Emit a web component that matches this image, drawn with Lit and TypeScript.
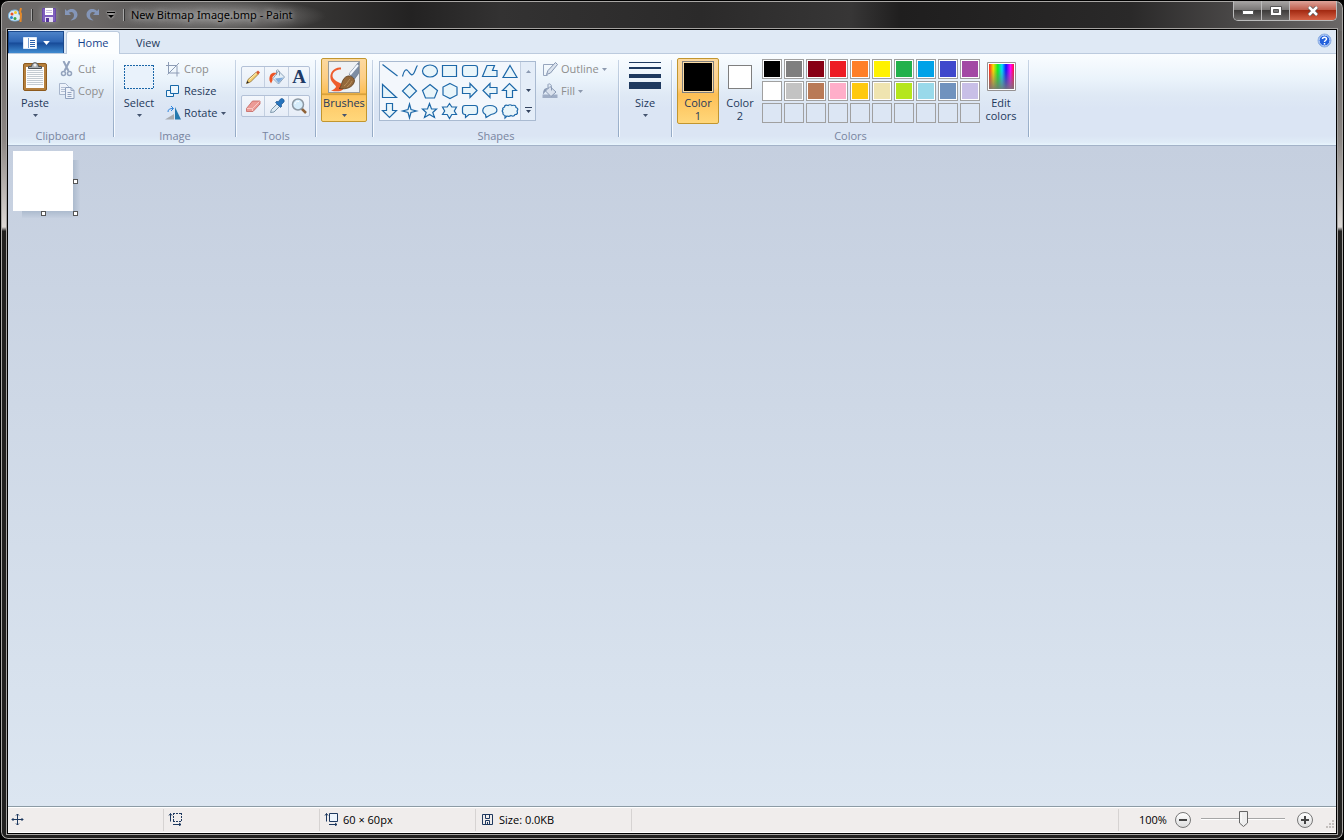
import { LitElement, html, svg, css } from "lit";
import { customElement, property, state } from "lit/decorators.js";

const PALETTE = [
  ["Black", "#000000"], ["Gray-50%", "#7f7f7f"], ["Dark red", "#880015"], ["Red", "#ed1c24"], ["Orange", "#ff7f27"],
  ["Yellow", "#fff200"], ["Green", "#22b14c"], ["Turquoise", "#00a2e8"], ["Indigo", "#3f48cc"], ["Purple", "#a349a4"],
  ["White", "#ffffff"], ["Gray-25%", "#c3c3c3"], ["Brown", "#b97a57"], ["Rose", "#ffaec9"], ["Gold", "#ffc90e"],
  ["Light yellow", "#efe4b0"], ["Lime", "#b5e61d"], ["Light turquoise", "#99d9ea"], ["Blue-gray", "#7092be"], ["Lavender", "#c8bfe7"],
];

const SHAPES: [string, string][] = [
  ["Line", "M2.5 3.5 17.5 15"],
  ["Curve", "M2.5 15.5C4 9 6 7.5 8 10S12 16 14 12 16.500 5 17.500 4.500"],
  ["Oval", "M2.500 10a7.500 6 0 1 0 15 0a7.500 6 0 1 0-15 0z"],
  ["Rectangle", "M2.500 4.500h14v11h-14z"],
  ["Rounded rectangle", "M5 4.500h10q2.500 0 2.500 2.500v6q0 2.500-2.500 2.500h-10q-2.500 0-2.500-2.500v-6q0-2.500 2.500-2.500z"],
  ["Polygon", "M7 4.500h7.500l-2 5h4.500v6H2.500z"],
  ["Triangle", "M10 4.500 17 16.500H3z"],
  ["Right triangle", "M2.500 3.500v13h14z"],
  ["Diamond", "M9.500 3 16.500 10 9.500 17 2.500 10z"],
  ["Pentagon", "M10 3.500 17.500 9.500 14.500 17h-9L2.500 9.500z"],
  ["Hexagon", "M10 2.500 17 6v8l-7 3.500L3 14V6z"],
  ["Right arrow", "M2.500 6.500h7.500v-4l7 7-7 7v-4H2.500z"],
  ["Left arrow", "M17 6.500h-7v-4l-7 7 7 7v-4h7z"],
  ["Up arrow", "M6.500 16.500v-7h-4l7-7 7 7h-4v7z"],
  ["Down arrow", "M6.500 2.500v7h-4l7 7 7-7h-4v-7z"],
  ["Four-point star", "M9.500 3 11 8.500 16.500 10 11 11.500 9.500 17 8 11.500 2.500 10 8 8.500z"],
  ["Five-point star", "M9.500 2.500 11.500 8H16.500L12.800 11.500 14.500 16.500 9.500 13.500 4.500 16.500 6.200 11.500 2.500 8H7.500z"],
  ["Six-point star", "M9.500 2.500 11.800 6H16.500L14.300 10 16.500 13.500H11.800L9.500 17.500 7.200 13.500H2.500L4.700 10 2.500 6H7.200z"],
  ["Rounded rectangular callout", "M5 4.500h10q2.500 0 2.500 2.500v4q0 2.500-2.500 2.500H9l-3.500 3v-3H5q-2.500 0-2.500-2.500v-4q0-2.500 2.500-2.500z"],
  ["Oval callout", "M5.500 13.500C1 11 2 4.500 10 4.500s10 8 1 9L6 16.500z"],
  ["Cloud callout", "M4.500 6q0-2.500 3.500-1.500 2-1.500 4 0 4-1 4 2 3 1 1 3.500 1.500 3.500-2 3.500-1 2.500-4 1-2 1.500-4 .5L5 17v-2.500q-2.500-.5-2-3-1.500-1.500 0-3Q2 7 4.500 6z"],
];

const icon = (size: number, body: unknown, box = size) =>
  html`<svg class="ic" width=${size} height=${size} viewBox="0 0 ${box} ${box}" fill="none" aria-hidden="true">${body}</svg>`;

const I = {
  app: svg`<path d="M7 3C2 3 .5 6 .5 9s2.500 5 6.500 5c3 0 6-1.500 6-4 0-1.500-1.500-2-2.500-3 .5-3-1-4-3.500-4z" fill="#d8ecf8" stroke="#7db4dc"/><circle cx="4" cy="7" r="1.500" fill="#e8542c"/><circle cx="7.500" cy="5.500" r="1.500" fill="#f3c528"/><circle cx="3.500" cy="10.500" r="1.500" fill="#2c82d0"/><circle cx="7" cy="11.500" r="1.500" fill="#3da64a"/><path d="m13 1-1 4 1 2-.5 8" stroke="#e58a2b" stroke-width="2"/>`,
  save: svg`<path d="M1.500 1.500h13v13h-13z" fill="#7f5fbd" stroke="#6a4ba8"/><path d="M4 1h8v7H4z" fill="#fff"/><path d="M5 3.500h6M5 5.500h6" stroke="#c9bde0"/><path d="M4 10h8v5H4z" fill="#e5ddf3"/><path d="M5 11h3v4H5z" fill="#56379a"/>`,
  undo: svg`<path d="M2 2v6h6L5.800 5.800C9 4 11 6 11 8.500c0 2-1.500 3.500-3.500 5C12.500 13 14.500 10.500 14.500 7.500 14 2 8 .5 4 4z" fill="#8496b8"/>`,
  redo: svg`<path d="M14 2v6H8l2.200-2.200C7 4 5 6 5 8.500c0 2 1.500 3.500 3.500 5C3.500 13 1.500 10.500 1.500 7.500 2 2 8 .5 12 4z" fill="#8496b8"/>`,
  paste: svg`<rect x="4.500" y="2.500" width="23" height="27" rx="1.500" fill="#b57f3c" stroke="#8d5a1d"/><path d="M7 6h18v21H7z" fill="#fdfdfd"/><path d="M8 9.500h16M8 11.500h16M8 13.500h16M8 15.500h16M8 17.500h16M8 19.500h16M8 21.500h16M8 23.500h16" stroke="#c4cbd1"/><path d="M9.500 5.500h3c0-5 7-5 7 0h3v2h-13z" fill="#a9adb0" stroke="#4d5154"/><circle cx="16" cy="4" r="1.500" fill="#eee"/>`,
  cut: svg`<path d="M4.500 0 9.500 10M10.500 0 5.500 10" stroke="#93a3bd" stroke-width="2"/><circle cx="4.500" cy="12.500" r="2" stroke="#93a3bd" stroke-width="1.500"/><circle cx="10.500" cy="12.500" r="2" stroke="#93a3bd" stroke-width="1.500"/>`,
  copy: svg`<path d="M.5.500h6l3 3v8h-9z" fill="#edf2fa" stroke="#a8b6cc"/><path d="M2 4.500h4M2 6.500h4M2 8.500h4" stroke="#b3bfd3"/><path d="M6.500 4.500h5.500l3 3v8H6.500z" fill="#edf2fa" stroke="#8fa0bd"/><path d="M12 4.500v3h3M8.500 9.500h4M8.500 11.500h4M8.500 13.500h4" stroke="#94a4c0"/>`,
  select: svg`<rect x="1.500" y="4.500" width="29" height="23" fill="#e9f2fb"/><path d="M1 4.500h30M1 27.500h30M1.500 4v24M30.500 4v24" stroke="#1a66a8" stroke-dasharray="2 1"/>`,
  crop: svg`<path d="M3.500 1v11h11M1 4.500h11v11M2.500 13.500 14 2" stroke="#8d9cb5"/>`,
  resize: svg`<path d="M5.500 2.500h8v8h-8zM5.500 7.500H1.500v6h7v-3" fill="#eef7fd" stroke="#1768a8"/>`,
  rotate: svg`<path d="M0 14.500 9 9v5.500z" fill="#a9acb0"/><path d="M10 2v12.500h6z" fill="#2579ae"/><path d="M3 7C3 4 5 3.500 8 3.500M6 1l2.500 2.500L6 6" stroke="#2d84dd"/>`,
  pencil: svg`<path d="m1.500 14.500 1.500-4L11.500 3l2 2L5.500 13z" fill="#f5cf6b" stroke="#8f7138" stroke-width=".8"/><path d="m11 3.500 2-2 2 2-2 2z" fill="#d7572f"/><path d="m4.500 10.500 7-6.500" stroke="#fff3c4"/><path d="m1.500 14.500.8-2.500 1.700 1.500z" fill="#222"/>`,
  bucket: svg`<path d="M9.500 2 15.500 8l-6 7L4 9.500z" fill="#e4eff7" stroke="#7790ab" stroke-width=".8"/><path d="M6 9.500 14.500 8.500l-5 5.500z" fill="#7fabdc"/><path d="M7.500 6V1.500c1-1.500 3 0 3 2v3" stroke="#7b8c9e" stroke-width=".8"/><path d="M7.500 4C3 3 0 5 .5 11.500l1.500 3 1.500-3V8z" fill="#ed5426"/>`,
  eraser: svg`<path d="m1.500 10.500 6-7.500h7.500v3L8 13.500H1.500z" fill="#ec9b96" stroke="#c4645f" stroke-width=".8"/><path d="m2 10.500h5.500l7-7M7.500 10.500V13" stroke="#f8c9c5"/>`,
  picker: svg`<path d="m1.500 14.500 1-3L8 6l2.500 2.500L5 14z" fill="#dceaf4" stroke="#7f98ac"/><path d="m6.500 4.500 5 5 1.500-1.500-1-1 3-3c1-2-1.500-4.500-3.500-3l-2.500 3-1-1z" fill="#2674bd" stroke="#174e88" stroke-width=".6"/>`,
  magnifier: svg`<path d="m10 10 5 5" stroke="#8f6238" stroke-width="2.500"/><circle cx="7" cy="6.500" r="5.500" fill="#d6edfb" stroke="#8c98a3" stroke-width="1.500"/><path d="M4 6C4.500 4 6 3 8 3.500" stroke="#fff"/>`,
  brush: svg`<rect x=".5" y=".5" width="31" height="31" fill="#eef1f4" stroke="#9b9b98"/><path d="M13 6.500C7 5.500 1.500 11 2.500 17c.5 4 4 6 5.500 8.500 0 1.500-3 3.500-5 4 5 1.500 10 1 12-1l-2-6C9 21 4.500 18 4.500 15 4.500 11 8 8.500 13 8.500z" fill="#ee5c2c"/><path d="M21 13 30.500 1.500v11L26.500 18z" fill="#7e8ea4" stroke="#5f6f85" stroke-width=".7"/><path d="m22 13.500 8-9.500" stroke="#f4f9ff" stroke-width="2"/><path d="M11 27.500c3-1 2-11 9-12.500 3-.5 6.500 2 6.500 5-1 6-8 9-15.500 7.500z" fill="#94683a" stroke="#5a3c1d" stroke-width=".8"/><path d="M16 25c3-2 4-5 6-7M19 26c3-2 4-4 5-6" stroke="#b88f5c"/>`,
  outline: svg`<path d="M11 3.500H1.500v11h4" stroke="#97a6be"/><path d="m4.500 13.500 1.500-4L13.500 1.500l2 2L8.500 12z" fill="#dce4ef" stroke="#8595b0"/>`,
  fill: svg`<path d="M.5 11.500h15V15H.5z" fill="#a0aec6"/><path d="M8 3.500 14 9l-5 4.500L3.500 8z" fill="#dae2ee" stroke="#8a9ab4"/><path d="M6 6V1.500c1-1.500 3.500 0 3.500 2v4" stroke="#8a9ab4"/><path d="M5.500 5C2.500 5 1 7 1 11.500l2.500-3z" fill="#8a9ab4"/>`,
  lines: svg`<path d="M0 1h32v1H0zM0 6h32v2H0zM0 13h32v4H0zM0 21h32v7H0z" fill="#1e395f"/>`,
  spectrum: svg`<defs><linearGradient id="hue"><stop offset="0" stop-color="#f22"/><stop offset=".17" stop-color="#fd0"/><stop offset=".35" stop-color="#1e2"/><stop offset=".52" stop-color="#0df"/><stop offset=".68" stop-color="#11f"/><stop offset=".86" stop-color="#f0f"/><stop offset="1" stop-color="#f13"/></linearGradient><linearGradient id="fade" x2="0" y2="1"><stop offset=".2" stop-color="#777" stop-opacity="0"/><stop offset="1" stop-color="#777" stop-opacity=".9"/></linearGradient></defs><path d="M2.500 1.500h28v28h-28z" fill="#fff" stroke="#969292"/><path d="M4 3h25v25H4z" fill="url(#hue)"/><path d="M4 3h25v25H4z" fill="url(#fade)"/>`,
  move: svg`<path d="M6.500 1v11M1 6.500h11M5 2.500 6.500 1 8 2.500M5 10.500 6.500 12 8 10.500M2.500 5 1 6.500 2.500 8M10.500 5 12 6.500 10.500 8" stroke="#1e395f"/>`,
  selection: svg`<path d="M2.500 1.500v8M1 3.500l1.500-2L4 3.500M5 12.500h8M11 11l2 1.500-2 1.500" stroke="#1e395f"/><path d="M5 1.500h9M5 9.500h9M5.500 1v9M13.500 1v9" stroke="#1e395f" stroke-dasharray="2 1"/>`,
  dims: svg`<path d="M2.500 1.500v8M1 3.500l1.500-2L4 3.500M5 12.500h8M11 11l2 1.500-2 1.500" stroke="#1e395f"/><path d="M5.500 1.500h8v8h-8z" fill="#edf5fd" stroke="#1e395f"/>`,
  disk: svg`<path d="M2.500 2.500h10v10h-10zM5.500 2.500h4v4h-4zM5.500 12.500v-4h4v4M7.500 10v2" stroke="#1e395f"/>`,
};

const arrow = () => html`<svg class="arrow" width="5" height="3" viewBox="0 0 5 3" aria-hidden="true"><path d="M0 0h5L2.500 3z" fill="currentColor"/></svg>`;

@customElement("paint-group")
export class PaintGroup extends LitElement {
  @property() label = "";
  static styles = css`
    :host { display: flex; flex: none; }
    section { display: flex; flex-direction: column; }
    .body { display: flex; height: 71px; }
    .label { height: 14px; line-height: 14px; text-align: center; color: #7884a0; }
    .sep { width: 1px; height: 77px; margin: 2px 1px 0 0; background: linear-gradient(#c8d5e5, #93a9c5); box-shadow: 1px 0 #f6faff; }
  `;
  render() {
    return html`<section aria-label=${this.label || "Tool options"}><div class="body"><slot></slot></div><div class="label">${this.label}</div></section><span class="sep"></span>`;
  }
}

@customElement("app-root")
export class AppRoot extends LitElement {
  @state() zoom = 50;

  static styles = css`
    :host {
      display: block; height: 100vh; background: #000; color: #1e395b;
      font: 11px/13px "Open Sans", "Noto Sans", sans-serif;
    }
    * { box-sizing: border-box; }
    button { font: inherit; color: inherit; background: none; border: 0; padding: 0; margin: 0; }
    .ic, .arrow { display: block; flex: none; }
    .window {
      height: 100%; display: flex; flex-direction: column; padding: 0 6px 5px;
      border: 1px solid #000; border-radius: 8px;
      box-shadow: inset 0 0 0 1px #a9a7a5;
      background:
        radial-gradient(closest-side, #8d8b8a, #7a787799 60%, transparent) 105px -3px / 220px 36px no-repeat,
        linear-gradient(#65615f, #8d8885 55%, #dcd8d5 98%, #2b2a29) 0 30px / 6px 200px no-repeat,
        linear-gradient(#65615f, #8d8885 55%, #dcd8d5 98%, #2b2a29) 100% 30px / 6px 200px no-repeat,
        linear-gradient(90deg, #6b6867 0, #6b6867 90px, #4a4948 220px, #333231 330px, #232222 410px, #333232 500px, #2b2a2a 700px, #373636 850px, #1f1e1e 900px, #2a2929 1130px, #6b6867 100%) 0 0 / 100% 30px no-repeat,
        #222120;
    }
    .title { flex: none; display: flex; height: 28px; align-items: center; padding-left: 1px; }
    .title .bar { width: 2px; height: 12px; border-left: 1px solid #aaa; border-right: 1px solid #333; }
    .quick { display: flex; align-items: center; gap: 6px; margin: 0 6px 0 7px; }
    .quick button { display: block; }
    .quick button:nth-of-type(1) { margin-left: 2px; filter: drop-shadow(0 0 3px #999); }
    .quick .more { width: 8px; color: #000; filter: drop-shadow(0 0 1px #fff); }
    .quick .bar:last-child { margin-left: 2px; }
    .caption { margin: 0; font: 11px/14px "Noto Sans", sans-serif; color: #000; padding: 0 8px 0 0;
      text-shadow: 0 0 5px #b5b5b5, 0 0 8px #aaa; white-space: nowrap; }
    .controls { display: flex; margin-left: auto; align-self: flex-start; height: 20px;
      border: 1px solid #bbb; border-top: 0; border-radius: 0 0 5px 5px; overflow: hidden; }
    .controls button { width: 28px; display: grid; place-items: center; border-right: 1px solid #bbb;
      background: linear-gradient(#a8a6a5, #7b7978 45%, #3e3c3b 50%, #6d6b6a); }
    .controls .close { width: 46px; border: 0; background: linear-gradient(#dda399, #c1604f 45%, #a32a12 50%, #d66246); }
    .controls .min { padding-top: 4px; }
    .frame { flex: 1; min-height: 0; display: flex; flex-direction: column; border: 1px solid #000; box-shadow: 0 0 0 1px #a4a2a0; }
    .tabs { flex: none; display: flex; height: 24px; background: #dfe9f5; border-bottom: 1px solid #bccbde; padding-top: 1px; }
    .file { width: 56px; margin-right: 2px; display: flex; align-items: center; justify-content: center; gap: 6px; color: #fff;
      border: 1px solid #1c4a8d; border-bottom: 0; background: linear-gradient(#4d83c8, #2c64b3 48%, #174a98 52%, #3f8bd0); }
    .file .arrow { width: 7px; height: 4px; }
    .tab { width: 56px; color: #1e395b; }
    .tab.on { width: 54px; height: 23px; border: 1px solid #bccbde; border-bottom: 0; border-radius: 3px 3px 0 0; background: #fcfeff; color: #15428b; padding-bottom: 2px; }
    .help { margin: 2px 4px 0 auto; align-self: flex-start; }
    .ribbon { flex: none; display: flex; height: 92px; padding-top: 4px; border-bottom: 1px solid #a3b2c8; overflow: hidden;
      background: linear-gradient(#fafdff, #eaf3fb 28%, #dfe9f5 45%, #dbe5f4 60%, #dbe5f4 90%, #e0ecf7 97%, #e8f5fd); }
    .row { display: flex; }
    .big { width: 42px; height: 66px; flex: none; display: flex; flex-direction: column; align-items: center; padding-top: 3px; }
    .big .pic { width: 32px; height: 32px; margin-bottom: 3px; display: grid; place-items: center; }
    .big .arrow { margin-top: 5px; color: #44546f; }
    .hot { border: 1px solid #c2962f; border-radius: 2px; padding-top: 2px;
      background: linear-gradient(#fcd9a0, #fdcf86 45%, #fdbf55 55%, #ffd77b); }
    .brushes { width: 46px; height: 64px; background: linear-gradient(#fcd9a0, #fdcf86 30%, #fdbf55 55%, #d9a23c 56%, #d9a23c 58%, #fdc561 59%, #ffd77b); }
    .col { display: flex; flex-direction: column; }
    .small { height: 22px; display: flex; align-items: center; gap: 3px; padding: 0 3px 2px; white-space: nowrap; }
    .small .ic, .small .arrow { margin-top: 2px; }
    .small .arrow { color: #44546f; }
    .small:disabled { color: #8d8d8d; }
    .small:disabled .arrow { color: #8d99ae; }
    .clip { padding: 0 4px 0 6px; width: 105px; }
    .image { padding-left: 3px; width: 120px; }
    .image .col { margin-left: 2px; }
    .tools { width: 78px; padding: 8px 5px 0 4px; display: flex; flex-direction: column; gap: 7px; }
    .strip { display: grid; grid-template-columns: 23px 24px 1fr; height: 22px; border: 1px solid #b3c1d7; border-radius: 2px;
      background: linear-gradient(#f3f7fc, #e6edf7); }
    .strip button { display: grid; place-items: center; border-right: 1px solid #c3cfe0; }
    .strip button:last-child { border: 0; }
    .strip .letter { font: bold 19px/20px "Liberation Serif", serif; color: #1e3a66; }
    .brushbox { width: 55px; padding-left: 4px; }
    .shapes { width: 244px; padding-left: 5px; display: flex; }
    .gallery { margin-top: 3px; width: 157px; height: 60px; display: flex; background: #f3f7fc; box-shadow: inset 0 0 0 1px #a9bad1; }
    .grid { display: grid; grid-template-columns: repeat(7, 20px); grid-auto-rows: 20px; padding-left: 1px; }
    .scroll { flex: 1; display: grid; grid-template-rows: repeat(3, 1fr); margin: 1px 1px 1px 0; border-left: 1px solid #c3cfe0; background: #e4edf8; color: #33435f; }
    .scroll button { display: grid; place-items: center; }
    .scroll button:disabled { color: #8c9ab2; }
    .shapes .col { margin-left: 3px; }
    .size { width: 51px; padding-left: 4px; }
    .colors { width: 355px; padding-left: 4px; display: flex; }
    .chip { border: 1px solid #7f7f7f; background: #fff; padding: 1px; display: block; }
    .chip.large { width: 32px; height: 32px; background: #fbdca6; }
    .chip.mid { width: 24px; height: 24px; }
    .ink { display: block; width: 100%; height: 100%; }
    .large .ink { background: #000; }
    .mid .ink { background: #fff; }
    .palette { display: grid; grid-template-columns: repeat(10, 20px); grid-auto-rows: 20px; gap: 2px; margin: 1px 0 0 1px; }
    .palette button { border: 1px solid #a0a0a0; padding: 1px; background: #fff; }
    .palette button:disabled { background: #dce6f4; }
    .work { flex: 1; min-height: 0; padding: 5px; background: linear-gradient(#c5cfdf, #dce6f1); }
    .sheet { position: relative; width: 60px; height: 60px; background: #fff; }
    .sheet::before { content: ""; position: absolute; left: 9px; top: 9px; width: 58px; height: 58px;
      background:
        linear-gradient(90deg, #a9b8cb, #c5cfdf) 100% 0 / 8px 50px no-repeat,
        linear-gradient(#a9b8cb, #c5cfdf) 0 100% / 50px 8px no-repeat,
        radial-gradient(circle at 0 0, #a9b8cb, #c5cfdf 8px) 100% 100% / 8px 8px no-repeat; }
    .paper { position: absolute; inset: 0; background: #fff; }
    .handle { position: absolute; width: 5px; height: 5px; background: #fff; border: 1px solid #555; }
    .e { left: 60px; top: 28px; } .s { left: 28px; top: 60px; } .se { left: 60px; top: 60px; }
    .status { flex: none; display: flex; height: 27px; background: #f0edec; color: #000;
      border-top: 1px solid #8c9ba5; box-shadow: inset 0 1px #fff, inset 0 -1px #fff; }
    .cell { width: 156px; display: flex; align-items: center; gap: 5px; padding: 0 4px 2px; margin: 2px 0; border-right: 1px solid #d6d3d2; white-space: nowrap; }
    .cell:first-child { padding-left: 3px; }
    .cell.wide { flex: 1; }
    .zoom { display: flex; align-items: center; width: 217px; padding-left: 20px; }
    .pct { width: 36px; padding-bottom: 2px; }
    .round { width: 16px; height: 16px; border: 1px solid #777; border-radius: 8px; background: linear-gradient(#fff, #ddd); display: grid; place-items: center; }
    input[type="range"] { appearance: none; width: 84px; height: 16px; margin: 0 12px 2px 10px; background: linear-gradient(#a6a6a6, #a6a6a6) 0 7px / 100% 1px no-repeat, linear-gradient(#fff, #fff) 0 8px / 100% 1px no-repeat; }
    input::-webkit-slider-thumb { appearance: none; width: 10px; height: 16px;
      background: url("data:image/svg+xml,%3Csvg xmlns='http://www.w3.org/2000/svg' width='10' height='16'%3E%3Cpath d='M1.500 .5h8v11.500l-4 3.500-4-3.500z' fill='%23eee' stroke='%23666'/%3E%3Cpath d='M3 2v9' stroke='white'/%3E%3C/svg%3E"); }
    .grip { margin: 9px 2px 0 auto; }
  `;

  render() {
    return html`<div class="window">
      <header class="title">
        ${icon(16, I.app)}
        <div class="quick">
          <span class="bar"></span>
          <button aria-label="Save">${icon(16, I.save)}</button>
          <button aria-label="Undo">${icon(16, I.undo)}</button>
          <button aria-label="Redo">${icon(16, I.redo)}</button>
          <button class="more" aria-label="Customize"><svg class="ic" width="8" height="8" aria-hidden="true"><path d="M0 1h8v1H0zM1 4h6L4 7z"/></svg></button>
          <span class="bar"></span>
        </div>
        <h1 class="caption">New Bitmap Image.bmp - Paint</h1>
        <div class="controls">
          <button class="min" aria-label="Minimize"><svg class="ic" width="12" height="5"><path d="M.5.500h11v4H.5z" fill="#fff" stroke="#555"/></svg></button>
          <button aria-label="Maximize"><svg class="ic" width="12" height="10"><path d="M.5.500h11v9H.5z" fill="#fff" stroke="#555"/><path d="M3.500 3.500h5v3h-5z" fill="#777" stroke="#555"/></svg></button>
          <button class="close" aria-label="Close"><svg class="ic" width="12" height="10"><path d="m2 1 8 8M10 1 2 9" stroke="#555" stroke-width="4"/><path d="m2 1 8 8M10 1 2 9" stroke="#fff" stroke-width="2.500"/></svg></button>
        </div>
      </header>
      <main class="frame">
        <nav class="tabs">
          <button class="file" aria-label="Paint menu"><svg class="ic" width="14" height="12"><path d="M.5.500h13v11H.5z" fill="#fff" stroke="#dce9f8"/><path d="M5.500 1v10" stroke="#7ba0d0"/><path d="M7 3.500h5M7 5.500h5M7 7.500h5M7 9.500h5" stroke="#2b62ad"/></svg>${arrow()}</button>
          <button class="tab on">Home</button><button class="tab">View</button>
          <button class="help" aria-label="Help"><svg class="ic" width="15" height="15"><circle cx="7.500" cy="7.500" r="6.500" fill="#2361dc" stroke="#8eb0e0"/><circle cx="7.500" cy="7.500" r="5.500" stroke="#e1edff" fill="none"/><path d="M5.500 6c0-2.500 4-2.500 4 0 0 1.500-2 1.500-2 3M7.500 10v1.500" stroke="#fff" stroke-width="1.500" fill="none"/></svg></button>
        </nav>
        <div class="ribbon">
          <paint-group label="Clipboard"><div class="clip row">
            <button class="big"><span class="pic">${icon(32, I.paste)}</span>Paste${arrow()}</button>
            <div class="col"><button class="small" disabled>${icon(16, I.cut)}Cut</button><button class="small" disabled>${icon(16, I.copy)}Copy</button></div>
          </div></paint-group>
          <paint-group label="Image"><div class="image row">
            <button class="big"><span class="pic">${icon(32, I.select)}</span>Select${arrow()}</button>
            <div class="col"><button class="small" disabled>${icon(16, I.crop)}Crop</button><button class="small">${icon(16, I.resize)}Resize</button><button class="small">${icon(16, I.rotate)}Rotate${arrow()}</button></div>
          </div></paint-group>
          <paint-group label="Tools"><div class="tools">
            <div class="strip"><button aria-label="Pencil">${icon(16, I.pencil)}</button><button aria-label="Fill with color">${icon(16, I.bucket)}</button><button class="letter">A</button></div>
            <div class="strip"><button aria-label="Eraser">${icon(16, I.eraser)}</button><button aria-label="Color picker">${icon(16, I.picker)}</button><button aria-label="Magnifier">${icon(16, I.magnifier)}</button></div>
          </div></paint-group>
          <paint-group><div class="brushbox"><button class="big hot brushes"><span class="pic">${icon(32, I.brush)}</span>Brushes${arrow()}</button></div></paint-group>
          <paint-group label="Shapes"><div class="shapes">
            <div class="gallery">
              <div class="grid">${SHAPES.map(([name, d], i) => html`<button aria-label=${name}>${icon(20, svg`<path d=${d} fill=${i < 2 ? "none" : "#e9f5fa"} stroke="#1d68a8" stroke-width="1.200"/>`)}</button>`)}</div>
              <div class="scroll"><button disabled aria-label="Row up"><svg class="ic" width="5" height="3"><path d="M0 3h5L2.500 0z" fill="currentColor"/></svg></button><button aria-label="Row down">${arrow()}</button><button aria-label="All shapes"><svg class="ic" width="7" height="6"><path d="M0 0h7v1H0zM1 3h5L3.500 6z" fill="currentColor"/></svg></button></div>
            </div>
            <div class="col"><button class="small" disabled>${icon(16, I.outline)}Outline${arrow()}</button><button class="small" disabled>${icon(16, I.fill)}Fill${arrow()}</button></div>
          </div></paint-group>
          <paint-group><div class="size"><button class="big"><span class="pic">${icon(32, I.lines)}</span>Size${arrow()}</button></div></paint-group>
          <paint-group label="Colors"><div class="colors">
            <button class="big hot"><span class="pic"><span class="chip large"><span class="ink"></span></span></span>Color<br />1</button>
            <button class="big"><span class="pic"><span class="chip mid"><span class="ink"></span></span></span>Color<br />2</button>
            <div class="palette">
              ${PALETTE.map(([name, c]) => html`<button aria-label=${name}><span class="ink" style="background:${c}"></span></button>`)}
              ${Array.from({ length: 10 }, () => html`<button disabled aria-label="Empty custom color"></button>`)}
            </div>
            <button class="big"><span class="pic">${icon(32, I.spectrum)}</span>Edit<br />colors</button>
          </div></paint-group>
        </div>
        <div class="work"><div class="sheet"><div class="paper"></div><i class="handle e"></i><i class="handle s"></i><i class="handle se"></i></div></div>
        <footer class="status">
          <div class="cell">${icon(13, I.move)}</div>
          <div class="cell">${icon(14, I.selection)}</div>
          <div class="cell">${icon(14, I.dims)}<span>60 × 60px</span></div>
          <div class="cell">${icon(14, I.disk)}<span>Size: 0.0KB</span></div>
          <div class="cell wide"></div>
          <div class="zoom">
            <label class="pct" for="zoom">100%</label>
            <button class="round" aria-label="Zoom out"><svg class="ic" width="8" height="8"><path d="M0 3h8v2H0z" fill="#444"/></svg></button>
            <input id="zoom" type="range" min="0" max="100" .value=${String(this.zoom)} @input=${(e: Event) => (this.zoom = Number((e.target as HTMLInputElement).value))} />
            <button class="round" aria-label="Zoom in"><svg class="ic" width="8" height="8"><path d="M0 3h8v2H0zM3 0h2v8H3z" fill="#444"/></svg></button>
            <svg class="grip" width="9" height="9" aria-hidden="true"><path d="M7 0h2v2H7zM7 3h2v2H7zM7 6h2v2H7zM4 3h2v2H4zM4 6h2v2H4zM1 6h2v2H1z" fill="#c3bfbd"/></svg>
          </div>
        </footer>
      </main>
    </div>`;
  }
}
